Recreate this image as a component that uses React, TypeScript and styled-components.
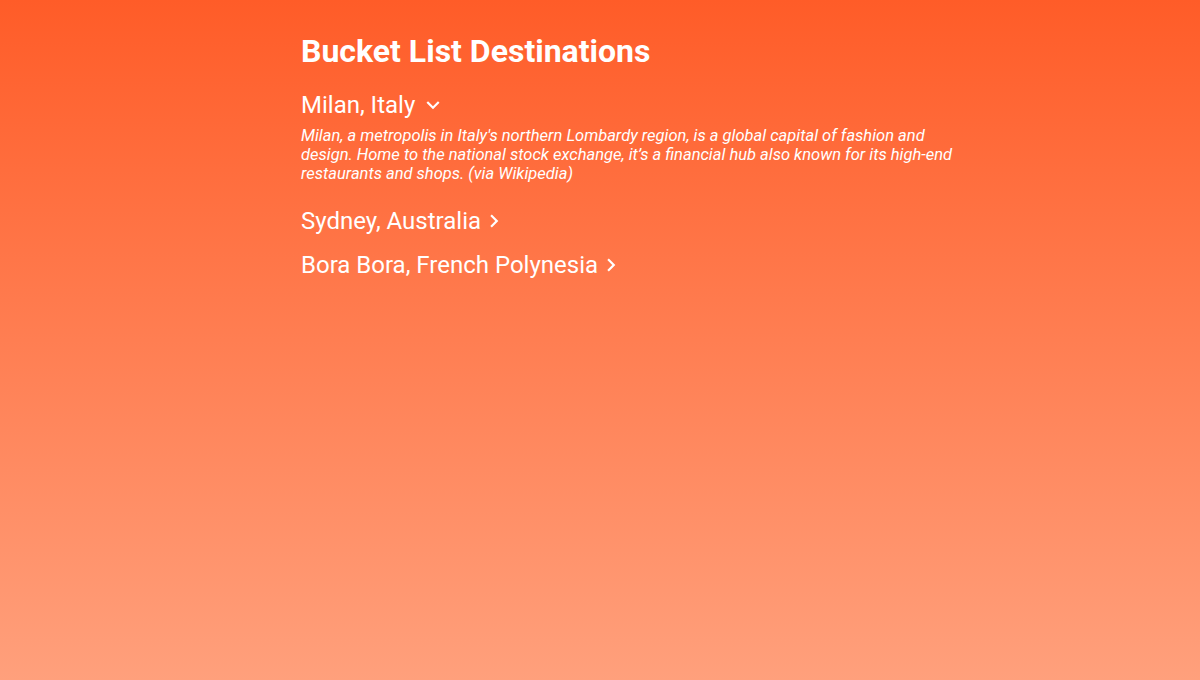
import React, { useState } from "react";
import styled, { createGlobalStyle } from "styled-components";

const Global = createGlobalStyle`
  html, body { margin: 0; padding: 0; height: 100%; }
  body {
    font-family: Roboto, "Noto Sans", sans-serif;
    background: linear-gradient(180deg, #ff5c28 0%, #ffa07c 100%);
    background-attachment: fixed;
    min-height: 680px;
    color: #fff;
  }
`;

const Page = styled.main`
  min-height: 680px;
  padding: 30px 0 0 301px;
  box-sizing: border-box;
`;

const Column = styled.section`
  width: 660px;
  display: flex;
  flex-direction: column;
`;

const Title = styled.h1`
  margin: 0 0 15px;
  font-size: 32px;
  line-height: 42px;
  font-weight: 700;
`;

const Item = styled.div`
  display: flex;
  flex-direction: column;
  margin-bottom: 8px;
`;

const Toggle = styled.button`
  display: flex;
  align-items: center;
  padding: 0;
  border: 0;
  background: none;
  color: #fff;
  font-family: inherit;
  font-size: 24px;
  line-height: 36px;
  cursor: pointer;
  text-align: left;
`;

const Icon = styled.svg<{ $open: boolean }>`
  width: 26px;
  height: 26px;
  flex: none;
  fill: #fff;
  margin-left: ${(p) => (p.$open ? "5px" : "0")};
`;

const Description = styled.p`
  margin: 3px 0 12px;
  font-size: 16.5px;
  line-height: 19px;
  font-style: italic;
`;

const Chevron = ({ open }: { open: boolean }) => (
  <Icon $open={open} viewBox="0 0 24 24" aria-hidden="true">
    {open ? (
      <path d="M16.59 8.59L12 13.17 7.41 8.59 6 10l6 6 6-6z" />
    ) : (
      <path d="M10 6L8.59 7.41 13.17 12l-4.58 4.59L10 18l6-6z" />
    )}
  </Icon>
);

const destinations = [
  {
    name: "Milan, Italy",
    text: "Milan, a metropolis in Italy's northern Lombardy region, is a global capital of fashion and design. Home to the national stock exchange, it’s a financial hub also known for its high-end restaurants and shops. (via Wikipedia)",
  },
  {
    name: "Sydney, Australia",
    text: "Sydney, capital of New South Wales and one of Australia's largest cities, is best known for its harbourfront Sydney Opera House. (via Wikipedia)",
  },
  {
    name: "Bora Bora, French Polynesia",
    text: "Bora Bora is a small South Pacific island northwest of Tahiti in French Polynesia. (via Wikipedia)",
  },
];

export default function App() {
  const [open, setOpen] = useState<number | null>(0);
  return (
    <>
      <Global />
      <Page>
        <Column>
          <Title>Bucket List Destinations</Title>
          {destinations.map((d, i) => (
            <Item key={d.name}>
              <Toggle onClick={() => setOpen(open === i ? null : i)}>
                {d.name}
                <Chevron open={open === i} />
              </Toggle>
              {open === i && <Description>{d.text}</Description>}
            </Item>
          ))}
        </Column>
      </Page>
    </>
  );
}
